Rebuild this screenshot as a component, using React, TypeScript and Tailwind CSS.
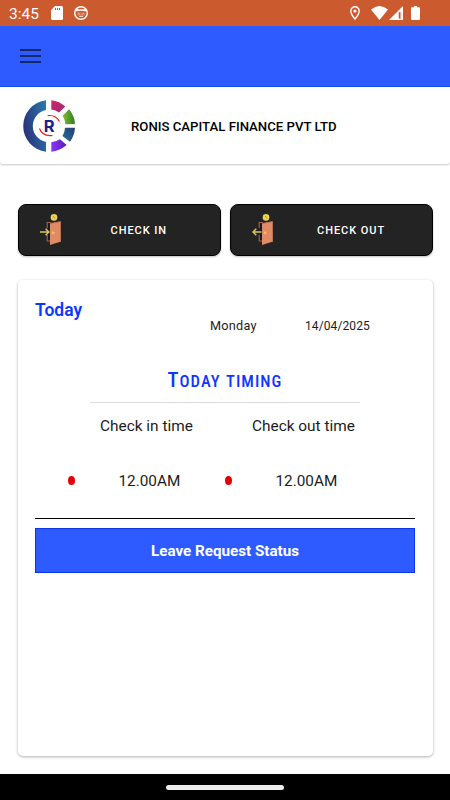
import clsx from 'clsx'

const actions = [
  { label: 'CHECK IN', out: false },
  { label: 'CHECK OUT', out: true },
]

function StatusBar() {
  return (
    <div className="flex h-[26px] shrink-0 items-center bg-[#cb5a2f] pl-[9px] pr-[30px] text-white">
      <span className="w-[42px] pt-[2px] text-[15.500px] leading-[24px]">3:45</span>
      <svg className="h-[14px] w-[12px]" viewBox="0 0 12 14">
        <path d="M4 0h6.5Q12 0 12 1.500V12.500Q12 14 10.500 14H1.500Q0 14 0 12.500V4.300Z" fill="#fff" />
        <path d="M4.500 2v2M6.500 2v2M8.500 2v2" stroke="#cb5a2f" strokeWidth="1" />
      </svg>
      <svg className="ml-[11px] h-[14px] w-[14px]" viewBox="0 0 14 14">
        <circle cx="7" cy="7" r="6.300" fill="none" stroke="#fff" strokeWidth="1.400" />
        <path d="M1.800 2.200 4.600 3.600Q7 3 9.400 3.600L12.200 2.200V5.600Q7 3.800 1.800 5.600Z" fill="#fff" />
        <path d="M2.500 7.500Q7 5.500 11.500 7.500Q11 10.500 7 10.800Q3 10.500 2.500 7.500Z" fill="#fff" fillOpacity="0.2" />
        <path d="M4 6.800l1.500 1.200M10 6.800 8.500 8M5 10.500h4" stroke="#fff" strokeWidth="0.700" />
      </svg>
      <div className="ml-auto flex items-center">
        <svg className="h-[14px] w-[10px]" viewBox="0 0 10 14">
          <path d="M5 .8a4.200 4.200 0 0 1 4.200 4.200C9.200 8.200 5 13 5 13S.8 8.200.8 5A4.200 4.200 0 0 1 5 .8Z" fill="none" stroke="#fff" strokeWidth="1.400" />
          <circle cx="5" cy="5" r="1.600" fill="#fff" />
        </svg>
        <svg className="ml-[11px] h-[14px] w-[17px]" viewBox="0 0 17 14">
          <path d="M0 3.500Q8.500-3.500 17 3.500L8.500 14Z" fill="#fff" />
        </svg>
        <svg className="ml-[1px] h-[14px] w-[14px]" viewBox="0 0 14 14">
          <path d="M14 0V14H0Z" fill="#fff" />
          <path d="M9.700 6.200h2.500V12.600H9.700Z" fill="#cb5a2f" />
          <path d="M11.700 4.500V12.500" stroke="#fff" strokeWidth="0.600" />
        </svg>
        <svg className="ml-[8px] h-[14px] w-[9px]" viewBox="0 0 9 14">
          <path d="M3 0h3v1.300h2Q9 1.300 9 2.300V13Q9 14 8 14H1Q0 14 0 13V2.300Q0 1.300 1 1.300H3Z" fill="#fff" />
        </svg>
      </div>
    </div>
  )
}

function Logo() {
  return (
    <svg className="h-[52px] w-[52px]" viewBox="0 0 52 52">
      <defs>
        <linearGradient id="left" x1="0" y1="0.6" x2="1" y2="0.2">
          <stop offset="0" stopColor="#2b2f78" />
          <stop offset="1" stopColor="#2878ac" />
        </linearGradient>
        <linearGradient id="pink" x1="0" y1="0" x2="1" y2="1">
          <stop offset="0" stopColor="#d8216a" />
          <stop offset="1" stopColor="#93306f" />
        </linearGradient>
        <linearGradient id="green" x1="0" y1="0.5" x2="1" y2="0.5">
          <stop offset="0" stopColor="#86bd38" />
          <stop offset="1" stopColor="#2c7c27" />
        </linearGradient>
        <linearGradient id="blue" x1="0" y1="1" x2="1" y2="0">
          <stop offset="0" stopColor="#276e9e" />
          <stop offset="1" stopColor="#24406f" />
        </linearGradient>
        <linearGradient id="purple" x1="0" y1="0" x2="1" y2="0">
          <stop offset="0" stopColor="#8a35ff" />
          <stop offset="1" stopColor="#5a1fae" />
        </linearGradient>
      </defs>
      <path d="M23 .2A26 26 0 0 0 23 51.800V42A16.300 16.300 0 0 1 23 10Z" fill="url(#left)" />
      <path d="M28.300 .2Q36.500 1 42.300 6.600L36 12.600Q32.800 10.200 28.300 9.600Z" fill="url(#pink)" />
      <path d="M46 9.300Q51.500 15.500 52 24L42.300 24.300Q42 19.500 39.700 15.700Z" fill="url(#green)" />
      <path d="M42 27.700H52Q51.500 35.500 47 41.700L39.500 36Q41.800 32.500 42 27.700Z" fill="url(#blue)" />
      <path d="M28.300 42.300Q33 41.800 37 39.300L43.700 45Q37 50.700 28.300 51.700Z" fill="url(#purple)" />
      <path d="M24.700 15.600Q33 14.800 36.500 21.500M16.500 28.500Q19.500 36.800 29.500 35.500" fill="none" stroke="#ef1d20" strokeWidth="1.200" />
      <text x="20.700" y="31.700" className="fill-[#1c1e8c] font-[Inter] text-[16.500px] font-bold">R</text>
    </svg>
  )
}

function DoorIcon({ out }: { out: boolean }) {
  return (
    <svg className="h-[31px] w-[21px] shrink-0" viewBox="0 0 21 31">
      <path d="M7.200 14V8.500H11M7.200 21V27H11" fill="none" stroke="#a95f49" strokeWidth="1.100" />
      <path d="M8 9h4v17H8Z" fill="#141c24" />
      <path d="M10 9.600 20.500 7.600 21 27.600 10 31Z" fill="#e18b66" />
      <path d="M10 9.600 20.500 7.600V27.600" fill="none" stroke="#bb7254" strokeWidth="0.900" />
      <circle cx="13.200" cy="18.700" r="1.300" fill="#f2c75c" />
      <circle cx="14" cy="3.400" r="3.300" fill="#edd25a" />
      <path d="M13.200 2 14.800 4.500" stroke="#c58a32" strokeWidth="1" />
      <path
        d={out ? 'M9.500 18H1M4.300 14.700 1 18 4.300 21.300' : 'M0 18H8.700M5.600 14.700 8.900 18 5.600 21.300'}
        fill="none"
        stroke="#dcc653"
        strokeWidth="1.500"
      />
    </svg>
  )
}

function Dot() {
  return <span className="mb-[2px] h-[9px] w-[7px] rounded-[50%] bg-[#e60000]" />
}

export default function App() {
  return (
    <div className="flex h-[800px] w-[450px] flex-col overflow-hidden bg-white font-[Roboto,sans-serif] text-[#1c1c1c]">
      <StatusBar />

      <header className="flex h-[61px] shrink-0 items-center border-b border-[#1247f5] bg-[#2e5bff] pl-[20px]">
        <button aria-label="Open menu" className="flex w-[21px] flex-col gap-[4px]">
          <span className="h-[2px] bg-[#142767]" />
          <span className="h-[2px] bg-[#142767]" />
          <span className="h-[2px] bg-[#142767]" />
        </button>
      </header>

      <div className="flex h-[77px] shrink-0 items-center rounded-b-[3px] pl-[23px] shadow-[0_1px_2px_rgba(0,0,0,0.22)]">
        <Logo />
        <h1 className="ml-[56px] pt-[2px] text-[13.200px] font-medium text-black">
          RONIS CAPITAL FINANCE PVT LTD
        </h1>
      </div>

      <div className="mx-[17.500px] mt-[40px] flex h-[52px] shrink-0 gap-[9px]">
        {actions.map(({ label, out }) => (
          <button
            key={label}
            className="flex flex-1 items-center rounded-[8px] border border-black bg-[#232323] pb-px pl-[21px] shadow-[0_1px_2px_rgba(0,0,0,0.25)]"
          >
            <DoorIcon out={out} />
            <span
              className={clsx(
                'pt-[3px] text-[11px] font-medium tracking-[0.95px] text-white',
                out ? 'ml-[44.500px]' : 'ml-[50px]'
              )}
            >
              {label}
            </span>
          </button>
        ))}
      </div>

      <main className="mx-[17.500px] mt-[24px] flex h-[476px] shrink-0 flex-col rounded-[5px] px-[17.500px] shadow-[0_1px_3px_rgba(0,0,0,0.32)]">
        <h2 className="mt-[19px] h-[23px] text-[17.500px] font-semibold leading-[23px] text-[#0d37ff]">Today</h2>
        <div className="-mt-[5px] flex h-[18px] items-center pl-[175px]">
          <span className="w-[95px] text-[12.700px] tracking-[0.25px]">Monday</span>
          <span className="text-[12px] tracking-[0.1px]">14/04/2025</span>
        </div>

        <div className="mx-[55px] mt-[31px] h-[37px] border-b border-[#dcdcdc] text-center">
          <h3 className="text-[16.600px] font-medium uppercase leading-[28px] tracking-[1.05px] text-[#0d37ff] [font-stretch:80%] [word-spacing:1px] first-letter:text-[20.500px]">
            Today timing
          </h3>
        </div>

        <div className="mt-[14px] flex h-[20px] items-center pl-[65px] text-[15.400px]">
          <span className="w-[152px]">Check in time</span>
          <span>Check out time</span>
        </div>
        <div className="mt-[34px] flex h-[20px] items-center pl-[33px] text-[15.300px]">
          <Dot />
          <span className="ml-[43.500px] w-[106.500px]">12.00AM</span>
          <Dot />
          <span className="ml-[43.500px]">12.00AM</span>
        </div>

        <hr className="mt-[27px] border-t border-black" />
        <button className="mt-[9px] h-[45px] border border-[#0a35ef] bg-[#2e5bff] pt-[2px] text-[15.200px] font-bold text-white">
          Leave Request Status
        </button>
      </main>

      <footer className="mt-auto flex h-[26px] shrink-0 items-center justify-center bg-black pt-px">
        <span className="h-[5px] w-[118px] rounded-full bg-[#ececec]" />
      </footer>
    </div>
  )
}
